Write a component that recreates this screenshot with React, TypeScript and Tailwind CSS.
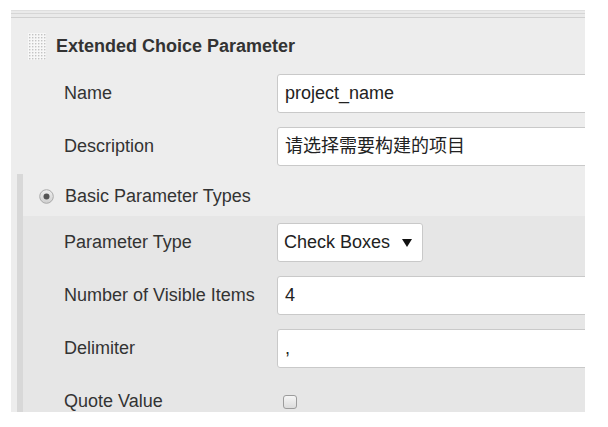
import React from "react";

const font = { fontFamily: '"Liberation Sans", Arial, "Noto Sans CJK SC", sans-serif' };

function Handle() {
  const dots: React.ReactNode[] = [];
  for (let r = 0; r < 9; r++) {
    for (let c = 0; c < 6; c++) {
      dots.push(<rect key={`${r}-${c}`} x={1 + c * 3} y={1 + r * 3} width={1.4} height={1.4} fill="#c4c4c4" />);
    }
  }
  return (
    <svg width="18" height="27" viewBox="0 0 18 27" className="shrink-0">
      <rect x="0" y="0" width="18" height="27" fill="#f7f7f7" />
      {dots}
    </svg>
  );
}

function Row({ label, children }: { label: string; children: React.ReactNode }) {
  return (
    <div className="flex h-[39px] shrink-0 items-center">
      <div className="w-[266px] shrink-0 whitespace-nowrap pl-[53px] text-[18px] text-[#333]">{label}</div>
      {children}
    </div>
  );
}

function TextBox({ value }: { value: string }) {
  return (
    <div className="flex h-[39px] w-[330px] shrink-0 items-center rounded-[3px] border border-[#c9c9c9] bg-white pl-[7px] text-[18px] text-[#222]">
      {value}
    </div>
  );
}

export default function App() {
  return (
    <div className="h-[427px] w-[608px] overflow-hidden bg-white" style={font}>
      <div className="ml-[11px] mt-[10px] h-[402px] w-[574px] overflow-hidden bg-[#ededed]">
        <div className="h-[1px] bg-[#dfdfdf]" />
        <div className="h-[2px] bg-[#eaeaea]" />
        <div className="h-[1px] bg-[#d6d6d6]" />
        <div className="h-[3px] bg-[#eaeaea]" />
        <div className="h-[1px] bg-[#d0d0d0]" />
        <div className="flex items-center gap-[10px] pl-[17px] pt-[15px]">
          <Handle />
          <div className="text-[18px] font-bold text-[#333]">Extended Choice Parameter</div>
        </div>
        <div className="mt-[14px] flex flex-col gap-[14px]">
          <Row label="Name">
            <TextBox value="project_name" />
          </Row>
          <Row label="Description">
            <TextBox value="请选择需要构建的项目" />
          </Row>
        </div>
        <div className="mt-[8px] flex">
          <div className="ml-[6px] w-[6px] shrink-0 bg-[#d8d8d8]" />
          <div className="flex flex-1 flex-col">
            <div className="flex h-[42px] shrink-0 items-center pt-[2px]">
              <svg width="15" height="15" viewBox="0 0 15 15" className="ml-[16px] shrink-0">
                <defs>
                  <linearGradient id="rg" x1="0" y1="0" x2="0" y2="1">
                    <stop offset="0" stopColor="#f0f0f0" />
                    <stop offset="1" stopColor="#cfcfcf" />
                  </linearGradient>
                </defs>
                <circle cx="7.5" cy="7.5" r="6.8" fill="url(#rg)" stroke="#aaaaaa" strokeWidth="1" />
                <circle cx="7.5" cy="7.5" r="3" fill="#555555" />
              </svg>
              <div className="ml-[11px] text-[18px] text-[#333]">Basic Parameter Types</div>
            </div>
            <div className="flex flex-col bg-[#e6e6e6] pb-[20px] pt-[7px]">
              <div className="-ml-[12px] flex flex-col gap-[14px]">
                <Row label="Parameter Type">
                  <div className="flex h-[39px] w-[146px] shrink-0 items-center justify-between rounded-[3px] border border-[#c9c9c9] bg-white pl-[6px] pr-[10px] text-[18px] text-[#222]">
                    <span>Check Boxes</span>
                    <svg width="10" height="8" viewBox="0 0 10 8">
                      <path d="M0 0 L10 0 L5 8 Z" fill="#111" />
                    </svg>
                  </div>
                </Row>
                <Row label="Number of Visible Items">
                  <TextBox value="4" />
                </Row>
                <Row label="Delimiter">
                  <TextBox value="," />
                </Row>
                <Row label="Quote Value">
                  <div className="ml-[6px] h-[14px] w-[14px] rounded-[3px] border border-[#9c9c9c] bg-gradient-to-b from-[#f6f6f6] to-[#dcdcdc]" />
                </Row>
              </div>
            </div>
          </div>
        </div>
      </div>
    </div>
  );
}
